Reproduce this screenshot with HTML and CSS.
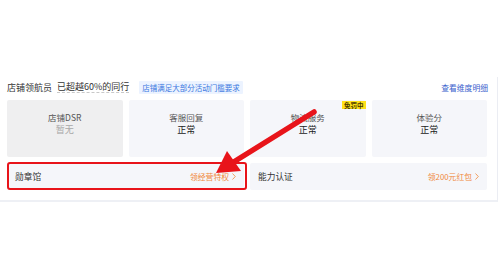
FILE: index.html
```html
<!DOCTYPE html>
<html lang="zh">
<head>
<meta charset="utf-8">
<link rel="stylesheet" href="styles.css">
</head>
<body>
<div class="card">
  <div class="head">
    <div class="head-left">
      <span class="level">店铺领航员</span>
      <span class="beat">已超越60%的同行</span>
      <span class="tag">店铺满足大部分活动门槛要求</span>
    </div>
    <a class="link">查看维度明细</a>
  </div>
  <div class="metrics">
    <div class="metric disabled">
      <div class="m-title">店铺DSR</div>
      <div class="m-value muted">暂无</div>
    </div>
    <div class="metric">
      <div class="m-title">客服回复</div>
      <div class="m-value">正常</div>
    </div>
    <div class="metric">
      <div class="m-title">物流服务</div>
      <div class="m-value">正常</div>
      <span class="badge">免罚中</span>
    </div>
    <div class="metric">
      <div class="m-title">体验分</div>
      <div class="m-value">正常</div>
    </div>
  </div>
  <div class="rows">
    <div class="row highlighted">
      <span class="r-name">勋章馆</span>
      <span class="r-action">领经营特权<svg class="chev" width="4" height="7" viewBox="0 0 4 7"><path d="M0.5 0.5 L3.3 3.5 L0.5 6.5" fill="none" stroke="#f0893c" stroke-width="0.8"/></svg></span>
    </div>
    <div class="row">
      <span class="r-name">能力认证</span>
      <span class="r-action">领200元红包<svg class="chev" width="4" height="7" viewBox="0 0 4 7"><path d="M0.5 0.5 L3.3 3.5 L0.5 6.5" fill="none" stroke="#f0893c" stroke-width="0.8"/></svg></span>
    </div>
  </div>
</div>
<svg class="arrow" width="500" height="272" viewBox="0 0 500 272">
  <line x1="314" y1="112" x2="232" y2="163" stroke="#e8141a" stroke-width="5.5" stroke-linecap="round"/>
  <polygon points="216,173 227,151 241,171" fill="#e8141a"/>
</svg>
</body>
</html>
```
FILE: styles.css
```css
html, body {
  margin: 0;
  padding: 0;
  background: #ffffff;
}
body {
  width: 500px;
  height: 272px;
  position: relative;
  overflow: hidden;
  font-family: "Noto Sans CJK SC", "Noto Sans", sans-serif;
  color: #333;
}
.card {
  margin-top: 77px;
  width: 498px;
  box-sizing: border-box;
  border-right: 1px solid #ebedf3;
  border-bottom: 2px solid #eef0f5;
  padding: 2px 10px 10px 7px;
}
.head {
  height: 16px;
  display: flex;
  align-items: center;
  justify-content: space-between;
}
.head-left {
  display: flex;
  align-items: center;
}
.level {
  font-size: 9px;
  color: #333;
  margin-right: 5px;
}
.beat {
  font-size: 9px;
  color: #333;
  border-bottom: 1px dashed #c8c8c8;
  line-height: 11px;
}
.tag {
  margin-left: 10px;
  font-size: 7.5px;
  color: #3a78e0;
  background: #ecf3ff;
  padding: 1px 3px;
  line-height: 11px;
  border-radius: 1px;
}
.link {
  font-size: 7.8px;
  color: #3a5fcd;
  margin-right: -1px;
}
.metrics {
  margin-top: 5px;
  display: grid;
  grid-template-columns: repeat(4, 1fr);
  gap: 6px;
}
.metric {
  height: 57px;
  box-sizing: border-box;
  padding-top: 12px;
  background: #f5f6fa;
  border-radius: 2px;
  text-align: center;
  position: relative;
}
.metric.disabled {
  background: #efeff0;
}
.m-title {
  font-size: 8.5px;
  line-height: 11px;
  color: #555;
}
.m-value {
  font-size: 9px;
  line-height: 13px;
  color: #222;
}
.m-value.muted {
  color: #a8a8a8;
}
.badge {
  position: absolute;
  top: 1px;
  right: 0;
  background: #ffe11a;
  color: #4a3a00;
  font-size: 6.5px;
  line-height: 8px;
  padding: 0 2px;
  font-weight: bold;
}
.rows {
  margin-top: 6px;
  display: grid;
  grid-template-columns: 1fr 1fr;
  gap: 6px;
}
.row {
  height: 27px;
  box-sizing: border-box;
  padding: 0 8px;
  background: #f5f6fa;
  border-radius: 2px;
  display: flex;
  align-items: center;
  justify-content: space-between;
  position: relative;
}
.r-name {
  font-size: 8.7px;
  color: #333;
}
.r-action {
  font-size: 7.8px;
  color: #f0893c;
  display: flex;
  align-items: center;
}
.chev {
  margin-left: 3px;
  display: block;
}
.highlighted::after {
  content: "";
  position: absolute;
  top: -1px;
  left: 0;
  right: -3px;
  bottom: 0;
  border: 2.5px solid #e8141a;
  border-radius: 3px;
  box-sizing: border-box;
}
.arrow {
  position: absolute;
  left: 0;
  top: 0;
  pointer-events: none;
}
```
